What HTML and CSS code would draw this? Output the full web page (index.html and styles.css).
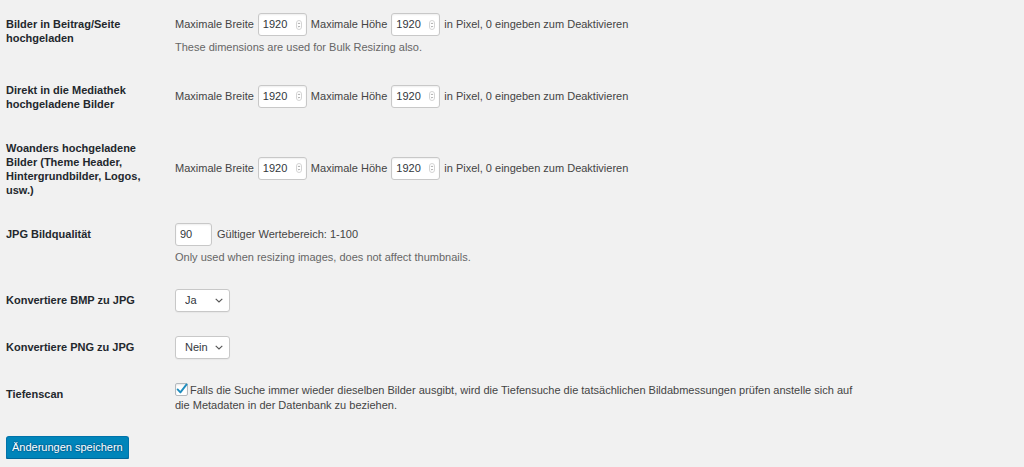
FILE: index.html
```html
<!DOCTYPE html>
<html lang="de">
<head>
<meta charset="utf-8">
<title>Bildgrößen Einstellungen</title>
<link rel="stylesheet" href="styles.css">
</head>
<body>
<form class="settings">
  <div class="form-table">
    <div class="row">
      <div class="th">Bilder in Beitrag/Seite hochgeladen</div>
      <div class="td">
        <div class="line">
          <span>Maximale Breite</span>
          <span class="num"><input type="text" value="1920"><svg class="spin" viewBox="0 0 6 10" width="6" height="10"><rect x="0.5" y="0.5" width="5" height="9" rx="2.5" fill="none" stroke="#d4d4d4"/><path d="M1.9 4 L3 2.9 L4.1 4 M1.9 6 L3 7.1 L4.1 6" fill="none" stroke="#9a9a9a" stroke-width="0.8"/></svg></span>
          <span>Maximale Höhe</span>
          <span class="num"><input type="text" value="1920"><svg class="spin" viewBox="0 0 6 10" width="6" height="10"><rect x="0.5" y="0.5" width="5" height="9" rx="2.5" fill="none" stroke="#d4d4d4"/><path d="M1.9 4 L3 2.9 L4.1 4 M1.9 6 L3 7.1 L4.1 6" fill="none" stroke="#9a9a9a" stroke-width="0.8"/></svg></span>
          <span>in Pixel, 0 eingeben zum Deaktivieren</span>
        </div>
        <p class="description">These dimensions are used for Bulk Resizing also.</p>
      </div>
    </div>

    <div class="row">
      <div class="th">Direkt in die Mediathek hochgeladene Bilder</div>
      <div class="td">
        <div class="line">
          <span>Maximale Breite</span>
          <span class="num"><input type="text" value="1920"><svg class="spin" viewBox="0 0 6 10" width="6" height="10"><rect x="0.5" y="0.5" width="5" height="9" rx="2.5" fill="none" stroke="#d4d4d4"/><path d="M1.9 4 L3 2.9 L4.1 4 M1.9 6 L3 7.1 L4.1 6" fill="none" stroke="#9a9a9a" stroke-width="0.8"/></svg></span>
          <span>Maximale Höhe</span>
          <span class="num"><input type="text" value="1920"><svg class="spin" viewBox="0 0 6 10" width="6" height="10"><rect x="0.5" y="0.5" width="5" height="9" rx="2.5" fill="none" stroke="#d4d4d4"/><path d="M1.9 4 L3 2.9 L4.1 4 M1.9 6 L3 7.1 L4.1 6" fill="none" stroke="#9a9a9a" stroke-width="0.8"/></svg></span>
          <span>in Pixel, 0 eingeben zum Deaktivieren</span>
        </div>
      </div>
    </div>

    <div class="row">
      <div class="th">Woanders hochgeladene Bilder (Theme Header, Hintergrundbilder, Logos, usw.)</div>
      <div class="td">
        <div class="line">
          <span>Maximale Breite</span>
          <span class="num"><input type="text" value="1920"><svg class="spin" viewBox="0 0 6 10" width="6" height="10"><rect x="0.5" y="0.5" width="5" height="9" rx="2.5" fill="none" stroke="#d4d4d4"/><path d="M1.9 4 L3 2.9 L4.1 4 M1.9 6 L3 7.1 L4.1 6" fill="none" stroke="#9a9a9a" stroke-width="0.8"/></svg></span>
          <span>Maximale Höhe</span>
          <span class="num"><input type="text" value="1920"><svg class="spin" viewBox="0 0 6 10" width="6" height="10"><rect x="0.5" y="0.5" width="5" height="9" rx="2.5" fill="none" stroke="#d4d4d4"/><path d="M1.9 4 L3 2.9 L4.1 4 M1.9 6 L3 7.1 L4.1 6" fill="none" stroke="#9a9a9a" stroke-width="0.8"/></svg></span>
          <span>in Pixel, 0 eingeben zum Deaktivieren</span>
        </div>
      </div>
    </div>

    <div class="row">
      <div class="th">JPG Bildqualität</div>
      <div class="td">
        <div class="line">
          <span class="num small"><input type="text" value="90"></span>
          <span class="hint">Gültiger Wertebereich: 1-100</span>
        </div>
        <p class="description">Only used when resizing images, does not affect thumbnails.</p>
      </div>
    </div>

    <div class="row">
      <div class="th">Konvertiere BMP zu JPG</div>
      <div class="td">
        <span class="select"><select><option selected>Ja</option><option>Nein</option></select><svg class="chev" viewBox="0 0 8 5" width="8" height="5"><path d="M0.7 0.8 L4 4 L7.3 0.8" fill="none" stroke="#555" stroke-width="1.1"/></svg></span>
      </div>
    </div>

    <div class="row">
      <div class="th">Konvertiere PNG zu JPG</div>
      <div class="td">
        <span class="select"><select><option>Ja</option><option selected>Nein</option></select><svg class="chev" viewBox="0 0 8 5" width="8" height="5"><path d="M0.7 0.8 L4 4 L7.3 0.8" fill="none" stroke="#555" stroke-width="1.1"/></svg></span>
      </div>
    </div>

    <div class="row">
      <div class="th">Tiefenscan</div>
      <div class="td">
        <label class="check"><span class="box"><svg viewBox="0 0 13 13" width="13" height="13"><path d="M2.6 6.4 L5.4 9.4 L11.6 1.4" fill="none" stroke="#1e8cbe" stroke-width="1.9" stroke-linecap="round" stroke-linejoin="round"/></svg></span>Falls die Suche immer wieder dieselben Bilder ausgibt, wird die Tiefensuche die tatsächlichen Bildabmessungen prüfen anstelle sich auf die Metadaten in der Datenbank zu beziehen.</label>
      </div>
    </div>
  </div>

  <p class="submit"><button type="button" class="button-primary">Änderungen speichern</button></p>
</form>
</body>
</html>
```

FILE: styles.css
```css
html, body {
  margin: 0;
  padding: 0;
  background: #f1f1f1;
}

body {
  font-family: "Liberation Sans", Arial, sans-serif;
  font-size: 11px;
  color: #444;
}

.settings {
  padding: 1px 0 0 6px;
}

.form-table {
  display: flex;
  flex-direction: column;
}

.row {
  display: grid;
  grid-template-columns: 169px 685px;
}

.th {
  align-self: start;
  padding: 16px 9px 14px 0;
  line-height: 14px;
  font-weight: bold;
  color: #23282d;
}

.td {
  align-self: center;
  padding: 12px 0;
  line-height: 15px;
}

.line {
  display: flex;
  align-items: center;
  gap: 4px;
}

.line .hint {
  margin-left: 1px;
}

.num {
  display: inline-flex;
  align-items: center;
  box-sizing: border-box;
  width: 49px;
  height: 23px;
  padding: 0 4px 0 4px;
  background: #fff;
  border: 1px solid #c8c8c8;
  border-radius: 3px;
  box-shadow: inset 0 1px 2px rgba(0, 0, 0, 0.07);
}

.num.small {
  width: 37px;
}

.num input {
  flex: 1;
  min-width: 0;
  width: 100%;
  border: 0;
  padding: 0;
  margin: 0;
  outline: none;
  background: transparent;
  font: inherit;
  font-size: 11px;
  color: #32373c;
}

.spin {
  flex: none;
  display: block;
}

.description {
  margin: 3px 0 0;
  line-height: 16px;
  color: #666;
}

.select {
  display: inline-flex;
  align-items: center;
  box-sizing: border-box;
  width: 55px;
  height: 23px;
  padding: 0 6px 0 9px;
  background: #fff;
  border: 1px solid #c8c8c8;
  border-radius: 3px;
  box-shadow: 0 1px 1px rgba(0, 0, 0, 0.04);
  vertical-align: middle;
}

.select select {
  flex: 1;
  min-width: 0;
  appearance: none;
  -webkit-appearance: none;
  border: 0;
  padding: 0;
  margin: 0;
  outline: none;
  background: transparent;
  font: inherit;
  font-size: 11px;
  color: #32373c;
}

.chev {
  flex: none;
  display: block;
}

.check {
  display: block;
  line-height: 15px;
  color: #444;
}

.check .box {
  display: inline-block;
  box-sizing: border-box;
  width: 13px;
  height: 13px;
  margin-right: 2px;
  vertical-align: -2px;
  background: #fff;
  border: 1px solid #b4b9be;
  border-radius: 2px;
  box-shadow: inset 0 1px 2px rgba(0, 0, 0, 0.1);
  overflow: visible;
}

.check .box svg {
  display: block;
  margin: -1px 0 0 -1px;
  overflow: visible;
}

.submit {
  margin: 11px 0 0;
  padding: 0;
}

.button-primary {
  display: inline-block;
  box-sizing: border-box;
  height: 23px;
  padding: 0 5px;
  margin: 0;
  font-family: "Liberation Sans", Arial, sans-serif;
  font-size: 11px;
  line-height: 21px;
  color: #fff;
  background: #0085ba;
  border: 1px solid #0073aa;
  border-bottom-color: #006799;
  border-radius: 3px;
  box-shadow: 0 1px 0 #006799;
  text-shadow: 0 -1px 1px #006799, 1px 0 1px #006799, 0 1px 1px #006799, -1px 0 1px #006799;
  cursor: pointer;
}
```
